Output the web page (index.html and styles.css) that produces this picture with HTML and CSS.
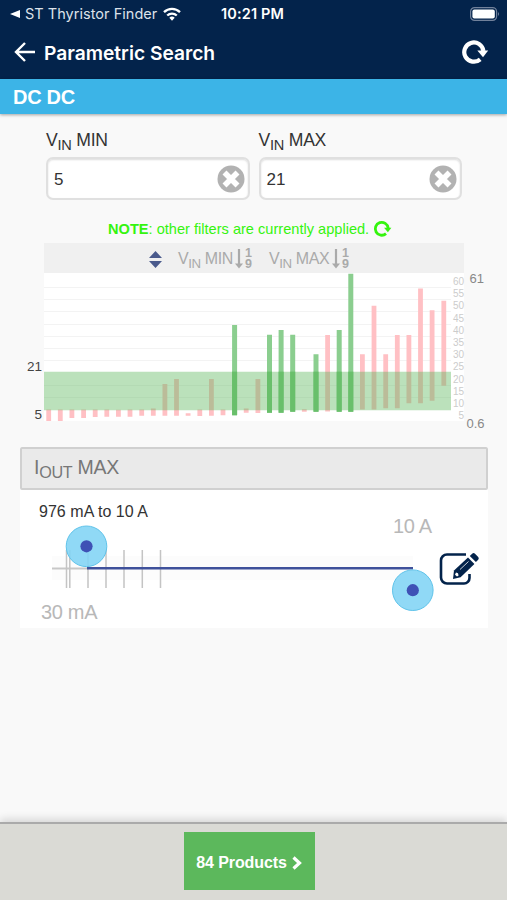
FILE: index.html
```html
<!DOCTYPE html>
<html lang="en">
<head>
<meta charset="utf-8">
<title>Parametric Search</title>
<link rel="stylesheet" href="styles.css">
</head>
<body>
<svg class="defs" aria-hidden="true">
  <symbol id="reload" viewBox="0 0 28 26"><path d="M19.200 20.300A9.600 9.600 0 1 1 22.400 12" fill="none" stroke="currentColor" stroke-width="4.200"/><path d="M16.300 11.500h10.900l-5.200 6.800z" fill="currentColor"/></symbol>
  <symbol id="clear" viewBox="0 0 28 28"><circle cx="14" cy="14" r="13.5" fill="#b2b2b2"/><path d="M7.5 7.5l13 13m0-13l-13 13" stroke="#fff" stroke-width="5.6"/></symbol>
  <symbol id="down" viewBox="0 0 8 20"><path d="M4 0v16" stroke="#aaa" stroke-width="2.200"/><path d="M0 14.500h8L4 19.500z" fill="#aaa"/></symbol>
</svg>
<header class="top">
  <div class="status">
    <svg class="back-tri" viewBox="0 0 10 8"><path d="M0 4l10-4v8z" fill="#fff"/></svg>
    <span class="app">ST Thyristor Finder</span>
    <svg class="wifi" viewBox="0 0 18 14"><g fill="none" stroke="#fff" stroke-width="2.3"><path d="M1 5.2a11.5 11.5 0 0 1 16 0"/><path d="M4.2 8.500a7 7 0 0 1 9.600 0"/></g><path d="M6.300 10.700a4 4 0 0 1 5.400 0L9 13.700z" fill="#fff"/></svg>
    <span class="time">10:21 PM</span>
    <svg class="battery" viewBox="0 0 30 14"><rect x=".6" y=".6" width="26" height="12.8" rx="4" fill="none" stroke="#71819b" stroke-width="1.2"/><rect x="2.4" y="2.4" width="22.4" height="9.2" rx="2" fill="#fff"/><path d="M28 5q2 2 0 4z" fill="#71819b"/></svg>
  </div>
  <div class="nav">
    <svg class="arrow" viewBox="0 0 22 20"><path d="M11 1L2 10l9 9M2 10h19" fill="none" stroke="#fff" stroke-width="2.4"/></svg>
    <h1>Parametric Search</h1>
    <svg class="reload"><use href="#reload"/></svg>
  </div>
</header>
<div class="category">DC DC</div>
<main>
  <div class="fields">
    <div class="field"><label>V<sub>IN</sub> MIN</label><div class="box"><span>5</span><svg><use href="#clear"/></svg></div></div>
    <div class="field"><label>V<sub>IN</sub> MAX</label><div class="box"><span>21</span><svg><use href="#clear"/></svg></div></div>
  </div>
  <p class="note"><span><b>NOTE</b>: other filters are currently applied.</span><svg><use href="#reload"/></svg></p>
  <div class="sort">
    <svg class="updown" viewBox="0 0 13 17"><path d="M0 7l6.500-7L13 7zM0 10h13l-6.500 7z" fill="#4a5a8c"/></svg>
    <span class="key">V<sub>IN</sub> MIN</span><svg class="down"><use href="#down"/></svg><span class="digits">1<br>9</span>
    <span class="key second">V<sub>IN</sub> MAX</span><svg class="down"><use href="#down"/></svg><span class="digits">1<br>9</span>
  </div>
  <svg class="chart" viewBox="0 273 507 174">
    <path d="M44 273h420v148H44z" fill="#fff"/>
    <path d="M44 287.500h407M44 299.500h407M44 311.500h407M44 324.500h407M44 336.500h407M44 348.500h407M44 360.500h407M44 385.500h407M44 397.500h407" stroke="#f3f3f3"/>
    <g stroke="#ffc0c4" stroke-width="4.800">
      <path d="M48.700 409.500V421M60.300 409.500V421M71.900 409.500V418M83.600 409.500V418M95.200 409.500V417M106.800 409.500V416.700M118.400 409.800V416.700M130 409.500V416.700M141.700 409.500V415.700M153.300 408.500V415.700M164.900 384V415.700M176.500 379V415.700M188.100 413.300V415.700M199.800 409.500V416M211.400 379V415.700M223 409.500V415.300M246.200 408.500V412.700M257.900 379V413M304.300 409.300V411.700M327.600 335V411.500M362.400 354.300V409.500M374 305.700V409.500M385.700 354.300V408.300M397.300 335V408.300M408.900 335V403.300M420.500 288.500V403.300M432.100 310.300V400.700M443.800 300.700V385.700"/>
    </g>
    <path d="M234.600 325V415.300M269.500 334.700V412.700M281.100 330V412.700M292.700 334.700V411.700M316 354.300V411.700M339.200 330V411.700M350.800 273.700V411.700" stroke="#8bce8f" stroke-width="5"/>
    <path d="M44 371.700h407v38.600H44z" fill="#5cb85c" fill-opacity=".42"/>
    <path d="M234.600 371.700V415.300M269.500 371.700V412.700M281.100 371.700V412.700M292.700 371.700V411.700M316 371.700V411.700M339.200 371.700V411.700M350.800 371.700V411.700" stroke="#69bf6b" stroke-width="5"/>
    <g class="bounds"><text x="27" y="371">21</text><text x="34.500" y="419">5</text></g>
    <g class="limits"><text x="469.500" y="283">61</text><text x="466.500" y="427.500">0.6</text></g>
    <g class="ticks"><text x="464" y="285">60</text><text x="464" y="297.200">55</text><text x="464" y="309.400">50</text><text x="464" y="321.600">45</text><text x="464" y="333.800">40</text><text x="464" y="346">35</text><text x="464" y="358.200">30</text><text x="464" y="370.400">25</text><text x="464" y="382.600">20</text><text x="464" y="394.800">15</text><text x="464" y="407">10</text><text x="464" y="419.200">5</text></g>
  </svg>
  <section class="panel">
    <h2>I<sub>OUT</sub> MAX</h2>
    <svg class="slider" viewBox="20 490 468 138">
      <path d="M52 556h361v24H52z" fill="#fcfcfc"/>
      <path d="M52 568.500h36" stroke="#c7c7c7" stroke-width="2"/>
      <path d="M66.500 550v38M69.800 550v38M88 550v38M106 550v38M124 550v38M142.300 550v38M160.500 550v38" stroke="#c4c4c4" stroke-width="1.500"/>
      <path d="M87 568.200h326" stroke="#3f519b" stroke-width="2.400"/>
      <g fill="#81d4f5" fill-opacity=".88" stroke="#5fc3ea"><circle cx="86.500" cy="546.300" r="20.300"/><circle cx="412.800" cy="590.200" r="20.300"/></g>
      <g fill="#3f51b5"><circle cx="86.500" cy="546.300" r="6.100"/><circle cx="412.800" cy="590.200" r="6.100"/></g>
      <text class="range" x="39" y="517" textLength="109">976 mA to 10 A</text>
      <text class="extent" x="393" y="533" textLength="39">10 A</text>
      <text class="extent" x="41" y="618.500" textLength="56.500">30 mA</text>
      <path d="M466 554.500h-19a6 6 0 0 0-6 6v17a6 6 0 0 0 6 6h17a5.500 5.500 0 0 0 5.500-5.500V574" fill="none" stroke="#03234b" stroke-width="2.600"/>
      <path d="M454 570.500l14-13 6.400 6.600-13.800 13.200-7.600 1.600z" fill="#03234b"/>
      <path d="M469.800 556l2.600-2.400q1.300-1.100 2.600.2l3.200 3.300q1.200 1.400 0 2.600l-2.300 2.300z" fill="#03234b"/>
      <path d="M460 569.500l8.500-8" stroke="#fff" stroke-width=".8"/><path d="M456 572.500l2 .8.600 2.300-1.600 1-2-1.800z" fill="#fff"/>
    </svg>
  </section>
</main>
<footer><button>84 Products<svg viewBox="0 0 10 14"><path d="M1.500 1.500L7.500 7l-6 5.500" fill="none" stroke="#fff" stroke-width="3.200"/></svg></button></footer>
</body>
</html>
```
FILE: styles.css
```css
* { box-sizing: border-box; }
body { margin: 0; height: 900px; display: flex; flex-direction: column; background: #f9f9f9; font-family: "Liberation Sans", Arial, sans-serif; color: #333; overflow: hidden; }
svg { display: block; flex: none; }
sub { font-size: 83%; line-height: 0; vertical-align: -4px; }
.defs { position: absolute; width: 0; height: 0; }
.top { height: 79px; background: #03234b; color: #fff; }
.status { height: 27px; display: flex; align-items: center; padding: 0 7px 0 10px; font: 14.5px Inter, sans-serif; }
.back-tri { width: 10px; height: 8px; margin-right: 5px; }
.app { width: 133px; white-space: nowrap; color: #dde2ea; letter-spacing: .03px; }
.wifi { width: 18px; height: 14px; margin-left: 5px; }
.time { margin-left: 40px; font-size: 14.500px; font-weight: 600; letter-spacing: .15px; white-space: nowrap; }
.battery { width: 30px; height: 14px; margin-left: auto; }
.nav { height: 52px; display: flex; align-items: center; padding: 0 18px 2px 14px; }
.arrow { width: 22px; height: 20px; }
h1 { margin: 2px 0 0 8px; font: 600 19.2px/28px Inter, sans-serif; white-space: nowrap; }
.nav .reload { width: 28px; height: 26px; margin-left: auto; }
.category { height: 35px; padding-left: 13px; background: #3cb4e7; color: #fff; font-weight: bold; font-size: 20px; letter-spacing: -.3px; line-height: 36px; box-shadow: 0 1px 3px rgba(0,0,0,.35); flex: none; }
main { flex: 1; }
.fields { display: flex; gap: 9px; padding: 15px 45px 0 46px; }
.field { width: 204px; }
.field label { display: block; height: 28px; line-height: 22px; font-size: 17.600px; letter-spacing: -.25px; }
.box { height: 43px; display: flex; align-items: center; justify-content: space-between; padding: 0 3px 0 6px; background: #fff; border: 2.500px solid #e0e0e0; border-radius: 7px; font-size: 17px; box-shadow: inset 0 1px 2px #ddd; }
.box span { padding-top: 2px; }
.box svg { width: 28px; height: 28px; }
.note { height: 26px; margin: 20px 0 0 108px; display: flex; align-items: flex-start; font-size: 14.600px; line-height: 19px; color: #35f40e; }
.note span { width: 262px; white-space: nowrap; }
.note svg { width: 19px; height: 17.500px; margin-left: 3px; }
.sort { width: 420px; height: 30px; margin-left: 44px; margin-top: -3px; padding: 2px 0 0 105px; display: flex; align-items: center; background: #f0f0f0; color: #aaa; font-size: 16px; }
.updown { width: 13px; height: 17px; }
.key { width: 54px; margin-left: 16px; white-space: nowrap; letter-spacing: -.4px; }
.key.second { width: 60px; margin-left: 17px; }
.down { width: 8px; height: 20px; margin-left: 3px; }
.digits { margin-left: 2px; font: bold 12.500px/11px "Liberation Sans", sans-serif; }
.chart { width: 507px; height: 174px; overflow: visible; }
.bounds text { font-size: 13.500px; fill: #444; }
.limits text { font-size: 13px; fill: #888; }
.ticks text { font-size: 10px; fill: #ccc; text-anchor: end; }
.panel { width: 468px; margin-left: 20px; background: #fff; }
h2 { margin: 0; height: 43px; padding-left: 12px; background: #eaeaea; border: 2px solid #d0d0d0; border-radius: 2px; color: #777; font-weight: normal; font-size: 19.500px; letter-spacing: -.3px; line-height: 36px; }
.slider { width: 468px; height: 138px; }
.range { font-size: 16px; fill: #333; }
.extent { font-size: 20px; fill: #b8b8b8; }
footer { position: relative; height: 78px; flex: none; padding-top: 8px; background: #dadad5; border-top: 2px solid #aaa; box-shadow: 0 -3px 8px rgba(0,0,0,.14); display: flex; justify-content: center; align-items: flex-start; }
button { width: 131px; height: 58px; margin-right: 9px; padding: 3px 0 0; display: flex; align-items: center; justify-content: center; gap: 5px; border: 0; background: #5cb85c; color: #fff; font: bold 16px "Liberation Sans", sans-serif; letter-spacing: -.1px; white-space: nowrap; }
button svg { width: 10px; height: 14px; }
```
